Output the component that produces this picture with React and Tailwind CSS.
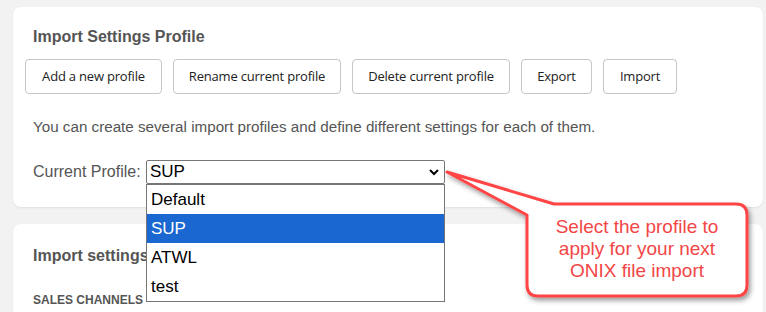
import React from 'react';

const buttons = [
  { label: 'Add a new profile', w: 'w-[137px]' },
  { label: 'Rename current profile', w: 'w-[168px]' },
  { label: 'Delete current profile', w: 'w-[158px]' },
  { label: 'Export', w: 'w-[71px]' },
  { label: 'Import', w: 'w-[74px]' },
];

const options = ['Default', 'SUP', 'ATWL', 'test'];

function Callout() {
  return (
    <>
      <svg
        className="absolute left-0 top-0 pointer-events-none"
        width="766"
        height="312"
        viewBox="0 0 766 312"
      >
        <defs>
          <filter id="shadow" x="-10%" y="-10%" width="130%" height="140%">
            <feDropShadow dx="2" dy="3" stdDeviation="2.5" floodColor="#000" floodOpacity="0.4" />
          </filter>
        </defs>
        <path
          d="M447 172 L554 204 L736 204 Q747 204 747 215 L747 285 Q747 296 736 296 L538 296 Q527 296 527 285 L527 215 Z"
          fill="#fff"
          stroke="#ff4545"
          strokeWidth="3"
          strokeLinejoin="round"
          filter="url(#shadow)"
        />
      </svg>
      <div className="absolute left-[527px] top-[204px] w-[220px] h-[92px] flex items-center justify-center pb-[3px] text-center text-[19px] leading-[22px] text-[#f24646] font-['Liberation_Sans',Arial,sans-serif]">
        <div>
          Select the profile to
          <br />
          apply for your next
          <br />
          ONIX file import
        </div>
      </div>
    </>
  );
}

export default function App() {
  return (
    <div className="relative w-[766px] h-[312px] overflow-hidden bg-[#f2f2f2] pt-[7px] pl-[13px] pr-[3px] font-['Liberation_Sans',Arial,sans-serif]">
      <div className="bg-white rounded-lg shadow-[0_1px_2px_rgba(0,0,0,0.08)] pt-[20px] pb-[23px] px-3">
        <h2 className="pl-2 text-[16px] leading-[20px] font-bold text-[#555]">Import Settings Profile</h2>
        <div className="mt-3 flex gap-[11px]">
          {buttons.map((b) => (
            <button
              key={b.label}
              className={`${b.w} h-[35px] bg-white border border-[#c6c6c6] rounded-[4px] text-[13px] text-[#222] font-['Open_Sans',sans-serif] tracking-[-0.2px]`}
            >
              {b.label}
            </button>
          ))}
        </div>
        <p className="pl-2 mt-[23px] text-[15.2px] leading-[20px] text-[#555]">
          You can create several import profiles and define different settings for each of them.
        </p>
        <div className="pl-2 mt-[23px] flex items-center">
          <span className="text-[16px] leading-[20px] text-[#555] w-[113px]">Current Profile:</span>
          <div className="relative w-[299px] h-[24px] border border-[#767676] rounded-[2px] bg-white flex items-center justify-between pl-[3px] pr-[3px]">
            <span className="text-[17px] leading-[20px] text-black">SUP</span>
            <svg width="12" height="8" viewBox="0 0 12 8" className="mr-[1px]">
              <path d="M2 2 L6 6 L10 2" fill="none" stroke="#000" strokeWidth="2" />
            </svg>
            <div className="absolute left-[-1px] top-[23px] w-[299px] bg-white border border-[#767676] z-10">
              {options.map((o) => (
                <div
                  key={o}
                  className={`h-[29px] pl-[4px] flex items-center text-[17px] ${o === 'SUP' ? 'bg-[#1a67d2] text-white' : 'text-black'}`}
                >
                  {o}
                </div>
              ))}
            </div>
          </div>
        </div>
      </div>
      <div className="mt-[17px] bg-white rounded-lg shadow-[0_1px_2px_rgba(0,0,0,0.08)] pt-[22px] px-5 h-[120px]">
        <h2 className="text-[16px] leading-[20px] font-bold text-[#555]">Import settings</h2>
        <div className="mt-[25px] text-[12px] font-bold text-[#555]">SALES CHANNELS</div>
      </div>
      <Callout />
    </div>
  );
}
